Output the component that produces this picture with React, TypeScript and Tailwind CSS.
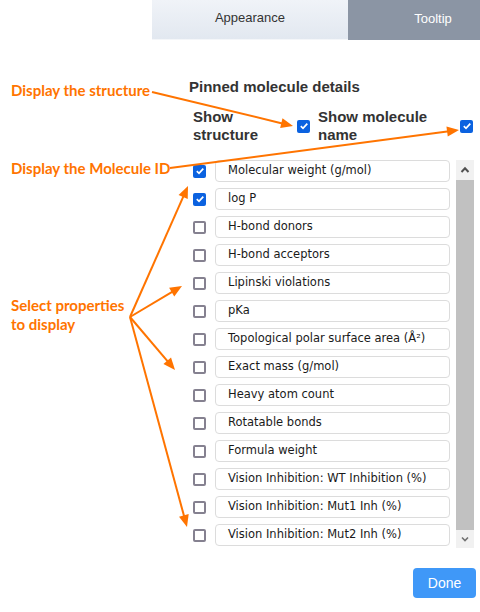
import React from "react";

const items: { label: string; checked: boolean }[] = [
  { label: "Molecular weight (g/mol)", checked: true },
  { label: "log P", checked: true },
  { label: "H-bond donors", checked: false },
  { label: "H-bond acceptors", checked: false },
  { label: "Lipinski violations", checked: false },
  { label: "pKa", checked: false },
  { label: "Topological polar surface area (Å²)", checked: false },
  { label: "Exact mass (g/mol)", checked: false },
  { label: "Heavy atom count", checked: false },
  { label: "Rotatable bonds", checked: false },
  { label: "Formula weight", checked: false },
  { label: "Vision Inhibition: WT Inhibition (%)", checked: false },
  { label: "Vision Inhibition: Mut1 Inh (%)", checked: false },
  { label: "Vision Inhibition: Mut2 Inh (%)", checked: false },
];

function Check({ checked }: { checked: boolean }) {
  if (checked) {
    return (
      <div className="w-[13px] h-[13px] rounded-[2px] bg-[#0b62e0] flex items-center justify-center shrink-0">
        <svg width="10" height="10" viewBox="0 0 10 10">
          <path d="M1.8 5.2 L4 7.3 L8.3 2.6" stroke="white" strokeWidth="1.7" fill="none" />
        </svg>
      </div>
    );
  }
  return <div className="w-[13px] h-[13px] rounded-[2px] border-2 border-[#858190] bg-white shrink-0" />;
}

function Arrow({ x1, y1, x2, y2 }: { x1: number; y1: number; x2: number; y2: number }) {
  const dx = x2 - x1;
  const dy = y2 - y1;
  const len = Math.sqrt(dx * dx + dy * dy);
  const ux = dx / len;
  const uy = dy / len;
  const hl = 12;
  const hw = 5;
  const bx = x2 - ux * hl;
  const by = y2 - uy * hl;
  const p1 = `${bx - uy * hw},${by + ux * hw}`;
  const p2 = `${bx + uy * hw},${by - ux * hw}`;
  return (
    <g>
      <line x1={x1} y1={y1} x2={bx + ux * 2} y2={by + uy * 2} stroke="#ff7400" strokeWidth="2" />
      <polygon points={`${x2},${y2} ${p1} ${p2}`} fill="#ff7400" />
    </g>
  );
}

export default function App() {
  const ann = "absolute text-[#ff7400] font-bold text-[15px] leading-[19px] font-['Lato',sans-serif]";
  return (
    <div className="relative w-[480px] h-[612px] bg-white overflow-hidden font-['Liberation_Sans',Arial,sans-serif]">
      {/* tabs */}
      <div className="flex h-10">
        <div className="w-[152px]" />
        <div className="w-[196px] bg-gradient-to-b from-[#f0f3f8] to-[#e2e8f0] border-b border-[#f4f6f9] flex items-center justify-center text-[13px] text-[#333] pb-[3px]">
          Appearance
        </div>
        <div className="flex-1 bg-[#8b95a4] flex items-center justify-center text-[13px] text-white pb-[3px] pl-[38px]">
          Tooltip
        </div>
      </div>

      {/* content */}
      <div className="pl-[189px] pr-[6px]">
        <div className="mt-[39px] text-[15px] leading-4 font-bold text-[#333]">Pinned molecule details</div>
        <div className="mt-[13px] flex items-center pl-1 text-[15px] leading-[18px] font-bold text-[#333]">
          <div className="w-[104px]">
            Show
            <br />
            structure
          </div>
          <Check checked />
          <div className="ml-2 w-[142px]">
            Show molecule
            <br />
            name
          </div>
          <Check checked />
        </div>

        <div className="mt-4 flex">
          <div className="flex flex-col gap-[6px] w-[261px] pl-1">
            {items.map((it) => (
              <div key={it.label} className="flex items-center h-[22px]">
                <Check checked={it.checked} />
                <div className="ml-[9px] flex-1 h-[22px] rounded-[4px] border border-[#dcdcdc] flex items-center pl-3 text-[#1a1a1a] whitespace-nowrap">
                  <span className="font-['DejaVu_Sans',sans-serif] text-[11.5px]">{it.label}</span>
                </div>
              </div>
            ))}
          </div>
          <div className="ml-[6px] w-[18px] h-[388px] flex flex-col">
            <div className="h-[20px] bg-[#f1f1f1] flex items-center justify-center">
              <svg width="10" height="8" viewBox="0 0 10 8">
                <path d="M1.5 6 L5 2.3 L8.5 6" stroke="#505050" strokeWidth="2" fill="none" />
              </svg>
            </div>
            <div className="flex-1 bg-[#c1c1c1]" />
            <div className="h-[18px] bg-[#f1f1f1] flex items-center justify-center">
              <svg width="10" height="8" viewBox="0 0 10 8">
                <path d="M2 2.5 L5 5.5 L8 2.5" stroke="#707070" strokeWidth="1.6" fill="none" />
              </svg>
            </div>
          </div>
        </div>
      </div>

      <div className="flex justify-end pr-[4px] mt-[20px]">
        <button className="w-[63px] h-[30px] rounded-[4px] bg-[#3f98f8] text-white text-[14px]">Done</button>
      </div>

      {/* annotations */}
      <div className={ann + " left-[11px] top-[81px]"}>Display the structure</div>
      <div className={ann + " left-[11px] top-[159px]"}>Display the Molecule ID</div>
      <div className={ann + " left-[11px] top-[296px]"}>
        Select properties
        <br />
        to display
      </div>
      <svg className="absolute left-0 top-0 pointer-events-none" width="480" height="612">
        <Arrow x1={152} y1={92} x2={293} y2={126} />
        <Arrow x1={170} y1={168} x2={459} y2={130} />
        <Arrow x1={130} y1={317} x2={188} y2={186} />
        <Arrow x1={130} y1={317} x2={182} y2={286} />
        <Arrow x1={130} y1={317} x2={175} y2={370} />
        <Arrow x1={130} y1={317} x2={187} y2={527} />
      </svg>
    </div>
  );
}
